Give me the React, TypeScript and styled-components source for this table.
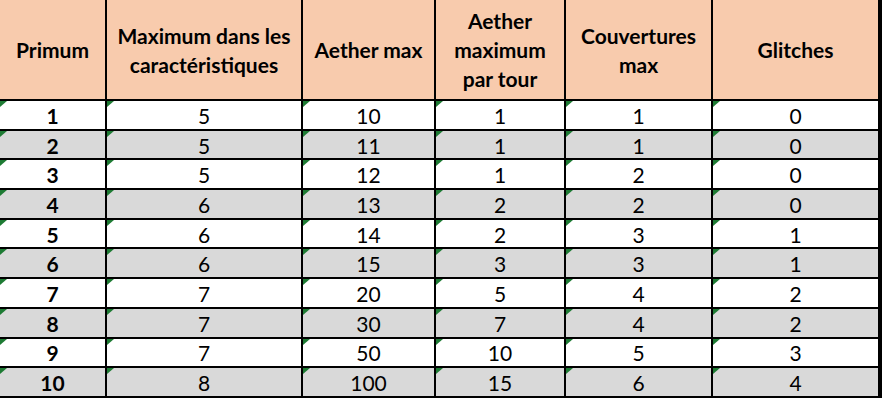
import styled, { createGlobalStyle } from 'styled-components';

const GlobalStyle = createGlobalStyle`
  html, body {
    margin: 0;
    padding: 0;
    background: #ffffff;
  }
`;

const headerLines: string[][] = [
  ['Primum'],
  ['Maximum dans les', 'caractéristiques'],
  ['Aether max'],
  ['Aether', 'maximum', 'par tour'],
  ['Couvertures', 'max'],
  ['Glitches'],
];

const rows: number[][] = [
  [1, 5, 10, 1, 1, 0],
  [2, 5, 11, 1, 1, 0],
  [3, 5, 12, 1, 2, 0],
  [4, 6, 13, 2, 2, 0],
  [5, 6, 14, 2, 3, 1],
  [6, 6, 15, 3, 3, 1],
  [7, 7, 20, 5, 4, 2],
  [8, 7, 30, 7, 4, 2],
  [9, 7, 50, 10, 5, 3],
  [10, 8, 100, 15, 6, 4],
];

const Sheet = styled.div`
  width: 880px;
  display: grid;
  grid-template-columns: 105px 194px 131px 128px 145px 165px;
  grid-template-rows: 99px repeat(10, 27.7px);
  column-gap: 2px;
  row-gap: 2px;
  padding: 0 2px 2px 0;
  box-sizing: content-box;
  background: #000000;
  font-family: Lato, 'Liberation Sans', sans-serif;
  color: #000000;
`;

const HeadCell = styled.div`
  background: #f8cbad;
  display: flex;
  flex-direction: column;
  align-items: center;
  justify-content: center;
  text-align: center;
  font-weight: 700;
  font-size: 21px;
  line-height: 29px;
  white-space: nowrap;
`;

const Cell = styled.div<{ $shade: boolean; $bold: boolean }>`
  position: relative;
  background: ${(p) => (p.$shade ? '#d9d9d9' : '#ffffff')};
  display: flex;
  align-items: center;
  justify-content: center;
  font-size: 21px;
  font-weight: ${(p) => (p.$bold ? 700 : 400)};
  padding-top: 1px;
  box-sizing: border-box;
`;

const Flag = styled.span`
  position: absolute;
  left: 0;
  top: 0;
  width: 0;
  height: 0;
  border-top: 6px solid #1e7b34;
  border-right: 7px solid transparent;
`;

export default function App() {
  return (
    <>
      <GlobalStyle />
      <Sheet>
        {headerLines.map((lines) => (
          <HeadCell key={lines.join(' ')}>
            {lines.map((l) => (
              <span key={l}>{l}</span>
            ))}
          </HeadCell>
        ))}
        {rows.map((row, r) =>
          row.map((v, c) => (
            <Cell key={`${r}-${c}`} $shade={r % 2 === 1} $bold={c === 0}>
              <Flag />
              {v}
            </Cell>
          ))
        )}
      </Sheet>
    </>
  );
}
